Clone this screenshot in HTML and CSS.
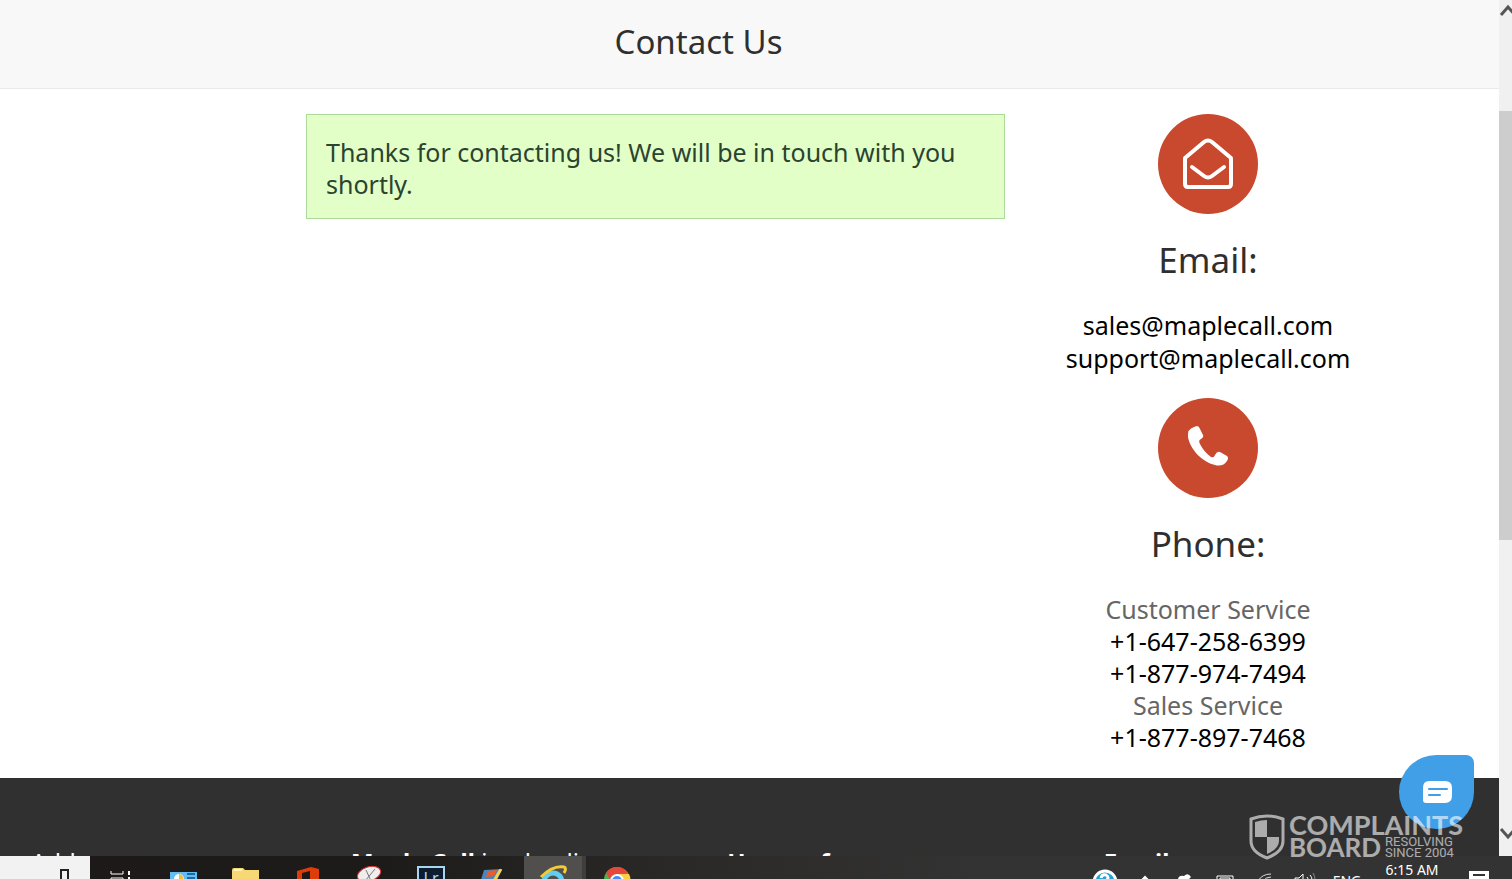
FILE: index.html
```html
<!DOCTYPE html>
<html lang="en">
<head>
    <meta charset="UTF-8">
    <meta name="viewport" content="width=device-width, initial-scale=1.0">
    <title>Contact Us</title>
    <link rel="stylesheet" href="styles.css">
</head>
<body>
    <div class="window">
        <div class="page">
            <header class="page-header">
                <h1>Contact Us</h1>
            </header>
            <main class="content">
                <div class="main-col">
                    <p class="notice" role="status">Thanks for contacting us! We will be in touch with you shortly.</p>
                </div>
                <aside class="sidebar">
                    <div class="circle">
                        <svg width="100" height="100" viewBox="0 0 100 100" fill="none" stroke="#fff" stroke-width="4" stroke-linejoin="round" stroke-linecap="round">
                            <path d="M27 44 L46 28 Q50 25 54 28 L73 44 V70 Q73 73 70 73 H30 Q27 73 27 70 Z"/>
                            <path d="M34 53 L46 62 Q50 65 54 62 L66 53"/>
                        </svg>
                    </div>
                    <h2>Email:</h2>
                    <p class="details">
                        <a href="mailto:sales@maplecall.com">sales@maplecall.com</a><br>
                        <a href="mailto:support@maplecall.com">support@maplecall.com</a>
                    </p>
                    <div class="circle">
                        <svg width="100" height="100" viewBox="0 0 100 100" fill="#fff">
                            <path d="M39 28 Q41 28 42 31 L45 37 Q46 39 43 41 Q40 42 42 46 Q46 54 53 59 Q56 60 57 57 Q59 53 62 54 L69 58 Q71 60 69 63 Q65 69 57 67 C44 64 32 51 30 39 Q29 31 36 29 Z"/>
                        </svg>
                    </div>
                    <h2>Phone:</h2>
                    <p class="details phones">
                        Customer Service<br>
                        <a href="tel:+16472586399">+1-647-258-6399</a><br>
                        <a href="tel:+18779747494">+1-877-974-7494</a><br>
                        Sales Service<br>
                        <a href="tel:+18778977468">+1-877-897-7468</a>
                    </p>
                </aside>
            </main>
            <footer class="footer">
                <div>Address</div>
                <div><strong>Maple Call</strong> is a leading</div>
                <div><strong>Hours of</strong></div>
                <div><strong>Email</strong></div>
            </footer>
        </div>
        <div class="scrollbar">
            <svg width="18" height="16" viewBox="0 0 18 16" fill="none" stroke="#555" stroke-width="3"><path d="M2 15 L9 7 L16 15"/></svg>
            <div class="track"><div class="thumb"></div></div>
            <svg width="18" height="30" viewBox="0 0 18 30" fill="none" stroke="#555" stroke-width="3"><path d="M2 3 L9 11 L16 3"/></svg>
        </div>
        <button class="chat" type="button" aria-label="Open chat">
            <svg width="30" height="24" viewBox="0 0 30 24">
                <path d="M7 1 H23 Q30 1 30 8 V16 Q30 23 23 23 H4 Q1 23 1 20 V8 Q1 1 7 1Z" fill="#fff"/>
                <path d="M7 9 H25 M7 15 H18" stroke="#419fe8" stroke-width="2" stroke-linecap="round"/>
            </svg>
        </button>
    </div>

    <div class="taskbar">
        <div class="search">
            <svg width="10" height="10" viewBox="0 0 10 10" fill="none" stroke="#222" stroke-width="2"><rect x="1" y="1" width="7" height="18"/></svg>
        </div>
        <div class="apps">
            <button type="button" aria-label="Task view">
                <svg width="28" height="14" viewBox="0 0 28 14" fill="none" stroke="#fff"><path d="M4 6 V9 H16 V6 M4 14 V13 H16 V14" stroke-width="1"/><path d="M22 6 V10 M22 12 V14" stroke-width="2"/></svg>
            </button>
            <button type="button" aria-label="Control panel">
                <svg width="28" height="10" viewBox="0 0 28 10"><rect x="1" y="3" width="27" height="16" fill="#63bdf0"/><circle cx="10" cy="10" r="5" fill="#fff"/><path d="M10 10 V5 A5 5 0 0 1 14 12Z" fill="#f5bb36"/><path d="M18 5 H26 M18 9 H26" stroke="#1769a8" stroke-width="2"/></svg>
            </button>
            <button type="button" aria-label="File explorer">
                <svg width="28" height="11" viewBox="0 0 28 11"><path d="M1 11 V2 Q1 0 3 0 H12 L14 2 H28 V11Z" fill="#f8d775"/><path d="M3 2 H11" stroke="#fff3c2" stroke-width="2"/></svg>
            </button>
            <button type="button" aria-label="Office">
                <svg width="28" height="12" viewBox="0 0 28 12"><path d="M4 4 L18 0 L26 2 V12 H17 V4 L9 6 V12 H4Z" fill="#de3c08"/></svg>
            </button>
            <button type="button" aria-label="Snipping tool">
                <svg width="28" height="13" viewBox="0 0 28 13"><ellipse cx="14" cy="8" rx="12" ry="7" transform="rotate(-18 14 8)" fill="#eee" stroke="#d33" stroke-width="1"/><path d="M11 4 L16 15 M20 3 L10 15" stroke="#777"/></svg>
            </button>
            <button type="button" aria-label="Lightroom">
                <span class="lr">Lr</span>
            </button>
            <button type="button" aria-label="Paint">
                <svg width="28" height="10" viewBox="0 0 28 10"><path d="M5 1 L23 0 L17 14 H1Z" fill="#4787bd"/><path d="M9 2 L18 1 L15 7 L7 8Z" fill="#f05a28"/><path d="M22 0 L15 12" stroke="#f4cf55" stroke-width="3"/></svg>
            </button>
            <button class="active" type="button" aria-label="Internet Explorer">
                <svg width="28" height="14" viewBox="0 0 28 14" fill="none"><path d="M5 17 A9 9 0 0 1 23 17" stroke="#62cdee" stroke-width="5"/><path d="M2 12 Q14 0 25 2 Q28 3 25 8" stroke="#f2cb37" stroke-width="3"/></svg>
            </button>
            <button type="button" aria-label="Chrome">
                <svg width="28" height="12" viewBox="0 0 28 12"><circle cx="14" cy="13" r="13" fill="#4caf50"/><path d="M3 6 A13 13 0 0 1 25 6 L14 9 L8 14Z" fill="#e5483b"/><path d="M14 7 H26 Q28 11 27 14 H14Z" fill="#f9cf45"/><circle cx="14" cy="14" r="6" fill="#4a8af4" stroke="#fff" stroke-width="2"/></svg>
            </button>
        </div>
        <div class="tray">
            <button type="button" aria-label="Help">
                <svg width="26" height="10" viewBox="0 0 26 10"><circle cx="13" cy="13" r="11" fill="#24a2d0" stroke="#fff" stroke-width="3"/><path d="M9 9 Q10 5 14 6 Q18 8 14 12" fill="none" stroke="#fff" stroke-width="3"/></svg>
            </button>
            <button type="button" aria-label="Show hidden icons">
                <svg width="20" height="4" viewBox="0 0 20 4" fill="none" stroke="#fff" stroke-width="2"><path d="M5 7 L10 2 L15 7"/></svg>
            </button>
            <button type="button" aria-label="Cloud">
                <svg width="20" height="5" viewBox="0 0 20 5" fill="#fff"><path d="M3 5 Q4 1 9 2 Q13 -2 16 3 L14 5Z"/></svg>
            </button>
            <button type="button" aria-label="Battery">
                <svg width="20" height="4" viewBox="0 0 20 4" fill="none" stroke="#fff"><path d="M2 4 V1 H18 V4 M5 4 V3 H15 V4"/></svg>
            </button>
            <button type="button" aria-label="Network">
                <svg width="20" height="6" viewBox="0 0 20 6" fill="none" stroke="#ddd"><path d="M3 8 Q7 1 16 1 M8 8 Q11 4 16 4"/></svg>
            </button>
            <button type="button" aria-label="Volume">
                <svg width="22" height="7" viewBox="0 0 22 7" fill="none" stroke="#fff"><path d="M1 8 V6 H5 L9 2 V8 M13 5 Q14 6 14 8 M16 3 Q18 5 18 8"/><path d="M19 1 Q21 4 21 8" stroke="#888"/></svg>
            </button>
            <button class="lang" type="button">ENG</button>
            <div class="clock">6:15 AM</div>
            <button class="notes" type="button" aria-label="Notifications">
                <svg width="20" height="8" viewBox="0 0 20 8"><path d="M0 0 H20 V8 H0Z" fill="#fff"/><path d="M4 4 H16" stroke="#333" stroke-width="2"/></svg>
            </button>
        </div>
    </div>

    <div class="watermark">
        <svg width="36" height="46" viewBox="0 0 36 46">
            <path d="M2 5 Q18 -1 34 5 V27 Q34 38 18 44 Q2 38 2 27Z" fill="none" stroke="currentColor" stroke-width="3"/>
            <path d="M6 8 Q12 6 18 6 V23 H6Z M18 23 H30 V27 Q30 35 18 40Z" fill="currentColor"/>
        </svg>
        <div class="brand">
            <div class="brand-name">COMPLAINTS</div>
            <div class="brand-row">
                <span class="brand-name small">BOARD</span>
                <span class="tagline">RESOLVING<br>SINCE 2004</span>
            </div>
        </div>
    </div>
</body>
</html>
```
FILE: styles.css
```css
* {
    box-sizing: border-box;
}

body {
    margin: 0;
    height: 100vh;
    display: flex;
    flex-direction: column;
    position: relative;
    overflow: hidden;
    font-family: "Segoe UI", "Noto Sans", sans-serif;
    font-size: 25px;
    line-height: 33px;
    color: #2f2f2f;
    background: #fff;
}

h1, h2, p {
    margin: 0;
    font-weight: normal;
}

button {
    border: none;
    padding: 0;
    background: none;
    color: inherit;
    font: inherit;
    cursor: pointer;
}

svg {
    display: block;
    flex: none;
}

.window {
    flex: 1;
    min-height: 0;
    display: flex;
    position: relative;
    overflow: hidden;
}

.page {
    flex: 1;
    min-width: 0;
    display: flex;
    flex-direction: column;
}

.page-header {
    padding: 18px 102px 22px 0;
    background: #f8f8f8;
    border-bottom: 1px solid #e9e9e9;
    text-align: center;
}

h1 {
    font-size: 33px;
    line-height: 48px;
}

.content {
    display: grid;
    grid-template-columns: 1fr 358px;
    gap: 24px;
    padding: 25px 112px 25px 306px;
}

.notice {
    padding: 21px 19px 18px;
    line-height: 32px;
    background: #e1ffc6;
    border: 1px solid #add99b;
    color: #2b4330;
}

.sidebar {
    text-align: center;
}

.circle {
    width: 100px;
    height: 100px;
    margin: 0 auto 22px;
    border-radius: 50%;
    background: #c9492e;
}

h2 {
    font-size: 35px;
    line-height: 48px;
    margin-bottom: 25px;
}

.details {
    color: #666;
}

.details + .circle {
    margin-top: 23px;
}

.phones {
    line-height: 32px;
}

.details a {
    color: #000;
    text-decoration: none;
}

.footer {
    flex: 1 0 120px;
    display: grid;
    grid-template-columns: 17fr 20fr 20fr 21fr;
    padding: 67px 0 0 31px;
    background: #303030;
    color: #fff;
    font-size: 24px;
    white-space: nowrap;
}

.scrollbar {
    width: 13px;
    display: flex;
    flex-direction: column;
    overflow: hidden;
    background: #f0f0f0;
}

.track {
    flex: 1;
    padding-top: 95px;
}

.thumb {
    height: 60%;
    background: #cdcdcd;
}

.chat {
    position: absolute;
    right: 38px;
    bottom: 27px;
    width: 75px;
    height: 74px;
    display: flex;
    justify-content: center;
    align-items: center;
    border-radius: 50% 8px 50% 50%;
    background: #419fe8;
}

.taskbar {
    height: 23px;
    display: flex;
    overflow: hidden;
    background: linear-gradient(90deg, #1c1918 0, #1d1b19 25%, #2b2927 45%, #333 65%);
    color: #fff;
}

.search {
    width: 90px;
    display: flex;
    align-items: flex-end;
    padding-left: 60px;
    background: #f2f2f2;
}

.apps, .tray {
    display: flex;
}

.apps button {
    width: 62px;
    display: flex;
    justify-content: center;
    align-items: flex-end;
}

.apps .active {
    background: #504f4e;
    border-right: 4px solid #403e3d;
}

.lr {
    width: 28px;
    height: 13px;
    overflow: hidden;
    border: 2px solid #a9d5ee;
    border-bottom: none;
    background: #0c1d31;
    color: #b5dcf2;
    font-size: 16px;
    line-height: 20px;
}

.tray {
    margin-left: auto;
    padding-right: 9px;
    font-size: 14px;
}

.tray button {
    width: 40px;
    display: flex;
    justify-content: center;
    align-items: flex-end;
}

.tray .lang {
    width: 44px;
    align-items: flex-start;
    padding-top: 15px;
    line-height: 20px;
}

.clock {
    width: 86px;
    padding-top: 4px;
    text-align: center;
    line-height: 20px;
}

.tray .notes {
    width: 48px;
}

.watermark {
    position: absolute;
    right: 49px;
    bottom: 19px;
    display: flex;
    gap: 4px;
    color: #fff;
    opacity: 0.6;
    font-family: Lato, sans-serif;
    pointer-events: none;
}

.brand-name {
    font-size: 27px;
    font-weight: bold;
    line-height: 22px;
}

.brand-name.small {
    font-size: 26px;
}

.brand-row {
    display: flex;
    gap: 4px;
}

.tagline {
    font-family: Roboto, sans-serif;
    font-size: 13px;
    line-height: 11px;
}
```
